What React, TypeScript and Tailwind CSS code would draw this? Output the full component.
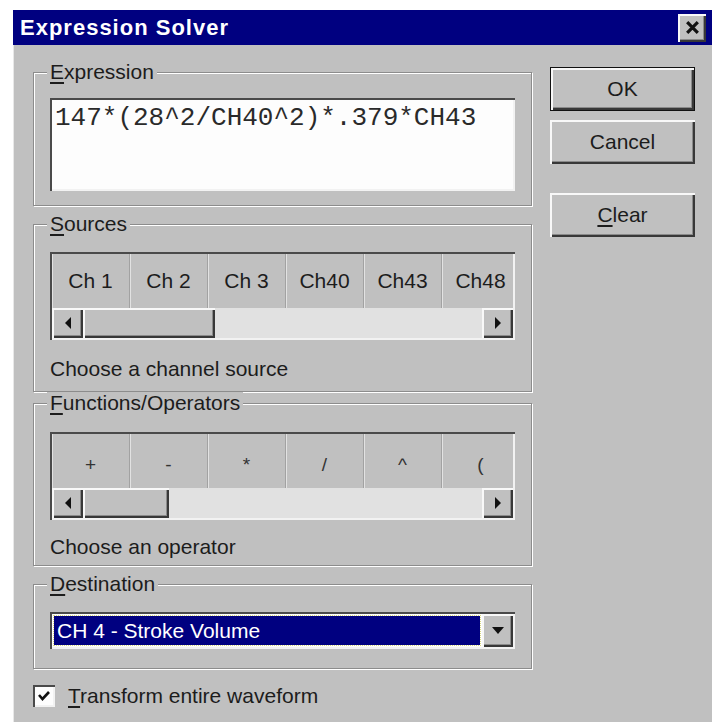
import type { ReactNode } from "react";

const raised =
  "shadow-[inset_2px_2px_0_#f8f8f8,inset_-2px_-2px_0_#383838,inset_-3px_-3px_0_#8a8a8a]";
const sunken = "shadow-[inset_2px_2px_0_#4a4a4a,inset_-2px_-2px_0_#f2f2f2]";

const Key = ({ children }: { children: ReactNode }) => (
  <span className="underline underline-offset-[3px]">{children}</span>
);

const GroupBox = ({
  label,
  className,
  children,
}: {
  label: ReactNode;
  className: string;
  children: ReactNode;
}) => (
  <fieldset
    className={`min-w-0 border border-[#8c8c8c] shadow-[inset_1px_1px_0_#fff,1px_1px_0_#fff] px-[16px] ${className}`}
  >
    <legend className="-ml-[3px] px-[3px] bg-[#c0c0c0] text-[21px] leading-[22px]">
      {label}
    </legend>
    {children}
  </fieldset>
);

const Arrow = ({ dir }: { dir: "left" | "right" | "down" }) => {
  const points = {
    left: "7,2 7,14 1,8",
    right: "1,2 1,14 7,8",
    down: "2,4 14,4 8,11",
  }[dir];
  const size = dir === "down" ? "w-[16px] h-[16px]" : "w-[8px] h-[16px]";
  return (
    <svg viewBox={dir === "down" ? "0 0 16 16" : "0 0 8 16"} className={size}>
      <polygon points={points} fill="#111" />
    </svg>
  );
};

const TabStrip = ({ items, thumb, small }: { items: string[]; thumb: string; small?: boolean }) => (
  <div className={`p-[2px] bg-[#c0c0c0] ${sunken}`}>
    <div className="flex h-[54px] overflow-hidden">
      {items.map((item) => (
        <div
          key={item}
          className={`w-[78px] shrink-0 flex items-center justify-center border-r border-[#a2a2a2] shadow-[inset_1px_0_0_#e2e2e2] ${
            small ? "text-[19px] pt-[8px] text-[#333]" : "text-[21px]"
          }`}
        >
          {item}
        </div>
      ))}
    </div>
    <div className="flex h-[30px]">
      <div className={`w-[31px] flex items-center justify-center bg-[#c0c0c0] ${raised}`}>
        <Arrow dir="left" />
      </div>
      <div className={`${thumb} bg-[#c0c0c0] ${raised}`} />
      <div className="flex-1 bg-[#e1e1e1]" />
      <div className={`w-[31px] flex items-center justify-center bg-[#c0c0c0] ${raised}`}>
        <Arrow dir="right" />
      </div>
    </div>
  </div>
);

const DialogButton = ({ children, isDefault }: { children: ReactNode; isDefault?: boolean }) => (
  <div
    className={`h-[44px] flex items-center justify-center bg-[#c0c0c0] text-[21px] ${
      isDefault ? "border border-[#111]" : ""
    } ${raised}`}
  >
    {children}
  </div>
);

export default function App() {
  const channels = ["Ch 1", "Ch 2", "Ch 3", "Ch40", "Ch43", "Ch48"];
  const operators = ["+", "-", "*", "/", "^", "("];

  return (
    <div className="w-[712px] h-[722px] overflow-hidden bg-white pl-[13px] pt-[10px] font-['Liberation_Sans',Arial,sans-serif] text-[#1c1c1c]">
      <div className="h-full flex flex-col bg-[#c0c0c0] shadow-[inset_1px_1px_0_#e8e8e8]">
        {/* title bar */}
        <div className="h-[35px] shrink-0 bg-[#000080] flex items-center pl-[7px] pr-[6px]">
          <span className="text-white font-bold text-[22px] tracking-[1px] leading-none">
            Expression Solver
          </span>
          <div
            className={`ml-auto w-[28px] h-[28px] bg-[#c0c0c0] flex items-center justify-center ${raised}`}
          >
            <svg viewBox="0 0 16 16" className="w-[17px] h-[17px]">
              <path d="M3 3 L13 13 M13 3 L3 13" stroke="#111" strokeWidth="3" />
            </svg>
          </div>
        </div>

        <div className="flex pl-[20px] pt-[16px]">
          <div className="w-[499px] flex flex-col">
            <GroupBox label={<><Key>E</Key>xpression</>} className="pt-[15px] pb-[14px]">
              <div className={`h-[93px] bg-[#fdfdfd] px-[5px] pt-[6px] ${sunken}`}>
                <span className="font-['Liberation_Mono','Courier_New',monospace] text-[26px] leading-[28px] text-[#2a2a2a]">
                  147*(28^2/CH40^2)*.379*CH43
                </span>
              </div>
            </GroupBox>

            <GroupBox label={<><Key>S</Key>ources</>} className="mt-[7px] pt-[17px] pb-[11px]">
              <TabStrip items={channels} thumb="w-[132px]" />
              <div className="mt-[18px] text-[21px] leading-[22px]">Choose a channel source</div>
            </GroupBox>

            <GroupBox
              label={<><Key>F</Key>unctions/Operators</>}
              className="mt-0 pt-[18px] pb-[7px]"
            >
              <TabStrip items={operators} thumb="w-[86px]" small />
              <div className="mt-[16px] text-[21px] leading-[22px]">Choose an operator</div>
            </GroupBox>

            <GroupBox label={<><Key>D</Key>estination</>} className="mt-[7px] pt-[17px] pb-[19px]">
              <div className={`h-[37px] p-[2px] flex bg-[#fdfdfd] ${sunken}`}>
                <div className="flex-1 m-[2px] bg-[#000080] outline outline-1 outline-dotted outline-[#d8d880] flex items-center pl-[3px]">
                  <span className="text-white text-[21px] leading-none">CH 4 - Stroke Volume</span>
                </div>
                <div className={`w-[31px] flex items-center justify-center bg-[#c0c0c0] ${raised}`}>
                  <Arrow dir="down" />
                </div>
              </div>
            </GroupBox>

            <div className="mt-[16px] flex items-center">
              <div className={`w-[22px] h-[22px] bg-[#fdfdfd] flex items-center justify-center ${sunken}`}>
                <svg viewBox="0 0 14 14" className="w-[14px] h-[14px]">
                  <path d="M2 6 L5.5 10 L12 3" stroke="#111" strokeWidth="2.6" fill="none" />
                </svg>
              </div>
              <span className="ml-[13px] text-[21px] leading-[22px]">
                <Key>T</Key>ransform entire waveform
              </span>
            </div>
          </div>

          <div className="ml-[18px] w-[145px] pt-[6px] flex flex-col">
            <DialogButton isDefault>OK</DialogButton>
            <div className="mt-[9px]">
              <DialogButton>Cancel</DialogButton>
            </div>
            <div className="mt-[29px]">
              <DialogButton>
                <span>
                  <Key>C</Key>lear
                </span>
              </DialogButton>
            </div>
          </div>
        </div>
      </div>
    </div>
  );
}
